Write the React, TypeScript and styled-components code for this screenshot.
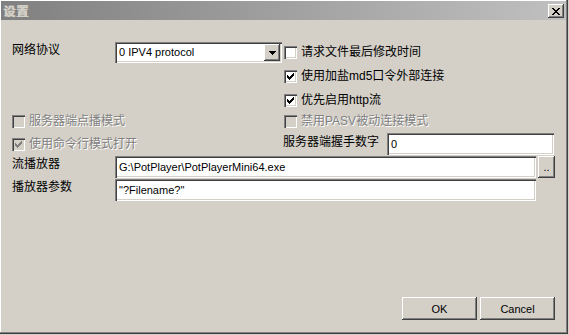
import React from 'react';
import styled, { createGlobalStyle, css } from 'styled-components';

const Global = createGlobalStyle`
  html, body { margin: 0; padding: 0; background: #d4d0c8; }
  body { width: 569px; height: 335px; overflow: hidden; }
  * { box-sizing: border-box; }
`;

const raised = css`
  background: #d4d0c8;
  box-shadow: inset -1px -1px #404040, inset 1px 1px #ffffff, inset -2px -2px #808080;
`;

const sunken = css`
  box-shadow: inset 1px 1px #808080, inset 2px 2px #404040, inset -1px -1px #ffffff, inset -2px -2px #d4d0c8;
`;

const Window = styled.div`
  width: 568px;
  height: 334px;
  display: flex;
  flex-direction: column;
  background: #d4d0c8;
  padding: 1px 1px 1px 1px;
  border-right: 1px solid #404040;
  border-bottom: 1px solid #404040;
  box-shadow: inset -1px -1px #808080, inset 1px 1px #ffffff;
  font-family: "Liberation Sans", "Noto Sans CJK SC", sans-serif;
  font-size: 12px;
  color: #000;
`;

const TitleBar = styled.div`
  height: 19px;
  flex: none;
  display: flex;
  align-items: flex-start;
  justify-content: space-between;
  padding: 0 2px 0 2px;
  background: linear-gradient(to right, #808080, #c0c0c0);
`;

const TitleText = styled.span`
  font-family: "Noto Sans CJK SC", sans-serif;
  font-weight: 700;
  font-size: 12px;
  line-height: 19px;
  color: #d4d0c8;
  text-shadow: 1px 0 #d4d0c8;
  letter-spacing: 1px;
`;

const CloseButton = styled.div`
  ${raised};
  width: 16px;
  height: 14px;
  margin-top: 3px;
  display: flex;
  align-items: center;
  justify-content: center;
`;

const Body = styled.div`
  flex: 1;
  display: flex;
  flex-direction: column;
  padding: 0 11px 12px 11px;
`;

const Row = styled.div<{ $mt: number; $h: number; $indent?: number }>`
  display: flex;
  align-items: center;
  height: ${p => p.$h}px;
  margin-top: ${p => p.$mt}px;
  padding-left: ${p => p.$indent ?? 0}px;
  flex: none;
`;

const FieldLabel = styled.span<{ $w: number; $pt?: number }>`
  width: ${p => p.$w}px;
  flex: none;
  align-self: flex-start;
  padding-top: ${p => p.$pt ?? 1}px;
  line-height: 14px;
  white-space: nowrap;
`;

const Combo = styled.div`
  ${sunken};
  width: 167px;
  height: 21px;
  background: #fff;
  display: flex;
  align-items: stretch;
  padding: 2px;
  flex: none;
`;

const ComboText = styled.span`
  flex: 1;
  font-family: "Liberation Sans", sans-serif;
  font-size: 11px;
  line-height: 17px;
  padding-left: 2px;
`;

const ComboButton = styled.div`
  ${raised};
  width: 16px;
  display: flex;
  align-items: center;
  justify-content: center;
`;

const CheckItem = styled.label<{ $w?: number; $disabled?: boolean }>`
  display: flex;
  align-items: center;
  flex: none;
  ${p => (p.$w ? `width: ${p.$w}px;` : '')}
  white-space: nowrap;
  color: ${p => (p.$disabled ? '#808080' : '#000')};
  text-shadow: ${p => (p.$disabled ? '1px 1px #ffffff' : 'none')};
`;

const Box = styled.span<{ $disabled?: boolean }>`
  ${sunken};
  width: 13px;
  height: 13px;
  flex: none;
  background: ${p => (p.$disabled ? '#d4d0c8' : '#ffffff')};
  margin-right: 4px;
  display: block;
  position: relative;
`;

const CheckText = styled.span`
  line-height: 13px;
`;

const TextField = styled.div<{ $w: number }>`
  ${sunken};
  width: ${p => p.$w}px;
  height: 22px;
  flex: none;
  background: #fff;
  padding: 2px 4px;
  font-family: "Liberation Sans", sans-serif;
  font-size: 11px;
  line-height: 18px;
  white-space: nowrap;
  overflow: hidden;
`;

const BrowseButton = styled.div`
  ${raised};
  width: 17px;
  height: 22px;
  margin-left: 2px;
  flex: none;
  font-family: "Liberation Sans", sans-serif;
  font-size: 11px;
  line-height: 11px;
  display: flex;
  align-items: flex-end;
  justify-content: center;
  padding-bottom: 5px;
`;

const Footer = styled.div`
  margin-top: auto;
  display: flex;
  justify-content: flex-end;
  gap: 3px;
`;

const PushButton = styled.div`
  ${raised};
  width: 75px;
  height: 23px;
  display: flex;
  align-items: center;
  justify-content: center;
  font-family: "Liberation Sans", sans-serif;
  font-size: 11px;
`;

const Pixels: React.FC<{ rows: string[]; color: string; x?: number; y?: number; w: number; h: number }> = ({ rows, color, x = 0, y = 0, w, h }) => (
  <svg width={w} height={h} viewBox={`0 0 ${w} ${h}`} shapeRendering="crispEdges" style={{ display: 'block' }}>
    {rows.flatMap((r, j) =>
      r.split('').map((c, i) => (c === 'X' ? <rect key={`${i}-${j}`} x={x + i} y={y + j} width={1} height={1} fill={color} /> : null))
    )}
  </svg>
);

const CHECK = ['......X', '.....XX', 'X...XXX', 'XX.XXX.', 'XXXXX..', '.XXX...', '..X....'];
const CLOSE = ['XX....XX', '.XX..XX.', '..XXXX..', '...XX...', '..XXXX..', '.XX..XX.', 'XX....XX'];
const ARROW = ['XXXXXXX', '.XXXXX.', '..XXX..', '...X...'];

const Check: React.FC<{ checked?: boolean; disabled?: boolean; label: string; w?: number }> = ({ checked, disabled, label, w }) => (
  <CheckItem $w={w} $disabled={disabled}>
    <Box $disabled={disabled}>
      {checked && (
        <Pixels rows={CHECK} color={disabled ? '#808080' : '#000'} x={3} y={3} w={13} h={13} />
      )}
    </Box>
    <CheckText>{label}</CheckText>
  </CheckItem>
);

export default function App() {
  return (
    <>
      <Global />
      <Window>
        <TitleBar>
          <TitleText>设置</TitleText>
          <CloseButton>
            <Pixels rows={CLOSE} color="#000" w={8} h={7} />
          </CloseButton>
        </TitleBar>
        <Body>
          <Row $mt={22} $h={21}>
            <FieldLabel $w={103}>网络协议</FieldLabel>
            <Combo>
              <ComboText>0 IPV4 protocol</ComboText>
              <ComboButton>
                <Pixels rows={ARROW} color="#000" w={7} h={4} />
              </ComboButton>
            </Combo>
            <span style={{ width: 2 }} />
            <Check label="请求文件最后修改时间" />
          </Row>
          <Row $mt={7} $h={13} $indent={272}>
            <Check checked label="使用加盐md5口令外部连接" />
          </Row>
          <Row $mt={11} $h={13} $indent={272}>
            <Check checked label="优先启用http流" />
          </Row>
          <Row $mt={8} $h={13}>
            <Check disabled w={272} label="服务器端点播模式" />
            <Check disabled label="禁用PASV被动连接模式" />
          </Row>
          <Row $mt={5} $h={22}>
            <Check disabled checked w={271} label="使用命令行模式打开" />
            <FieldLabel $w={104} $pt={2}>服务器端握手数字</FieldLabel>
            <TextField $w={167}>0</TextField>
          </Row>
          <Row $mt={1} $h={22}>
            <FieldLabel $w={103}>流播放器</FieldLabel>
            <TextField $w={421}>G:\PotPlayer\PotPlayerMini64.exe</TextField>
            <BrowseButton>..</BrowseButton>
          </Row>
          <Row $mt={1} $h={22}>
            <FieldLabel $w={103}>播放器参数</FieldLabel>
            <TextField $w={421}>"?Filename?"</TextField>
          </Row>
          <Footer>
            <PushButton>OK</PushButton>
            <PushButton>Cancel</PushButton>
          </Footer>
        </Body>
      </Window>
    </>
  );
}
